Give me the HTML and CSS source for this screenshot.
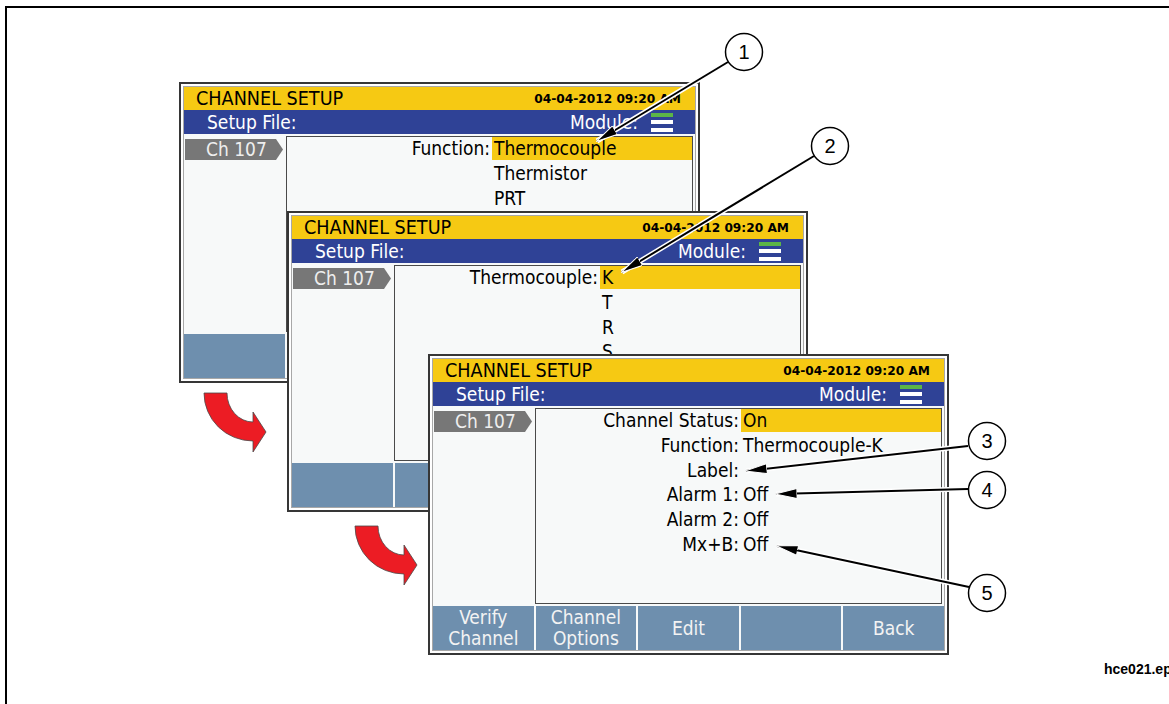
FILE: index.html
```html
<html>
  <head>
    <link rel="stylesheet" href="styles.css">
  </head>
  <body>
    <div class="frame">

      <div class="screen s1">
        <div class="lcd">
          <div class="title"><span class="name">CHANNEL SETUP</span><span class="clock">04-04-2012 09:20 AM</span></div>
          <div class="fileBar"><span>Setup File:</span><span class="module">Module: <i class="modIcon"><b></b><b></b><b></b></i></span></div>
          <div class="body">
            <div class="side"><div class="ch">Ch 107</div></div>
            <div class="list">
              <div class="k">Function:</div><div class="v sel">Thermocouple</div>
              <div class="k"></div><div class="v">Thermistor</div>
              <div class="k"></div><div class="v">PRT</div>
            </div>
          </div>
          <div class="keys">
            <div class="key"></div><div class="key"></div><div class="key"></div><div class="key"></div><div class="key"></div>
          </div>
        </div>
      </div>

      <div class="screen s2">
        <div class="lcd">
          <div class="title"><span class="name">CHANNEL SETUP</span><span class="clock">04-04-2012 09:20 AM</span></div>
          <div class="fileBar"><span>Setup File:</span><span class="module">Module: <i class="modIcon"><b></b><b></b><b></b></i></span></div>
          <div class="body">
            <div class="side"><div class="ch">Ch 107</div></div>
            <div class="list">
              <div class="k">Thermocouple:</div><div class="v sel">K</div>
              <div class="k"></div><div class="v">T</div>
              <div class="k"></div><div class="v">R</div>
              <div class="k"></div><div class="v">S</div>
            </div>
          </div>
          <div class="keys">
            <div class="key"></div><div class="key"></div><div class="key"></div><div class="key"></div><div class="key"></div>
          </div>
        </div>
      </div>

      <div class="screen s3">
        <div class="lcd">
          <div class="title"><span class="name">CHANNEL SETUP</span><span class="clock">04-04-2012 09:20 AM</span></div>
          <div class="fileBar"><span>Setup File:</span><span class="module">Module: <i class="modIcon"><b></b><b></b><b></b></i></span></div>
          <div class="body">
            <div class="side"><div class="ch">Ch 107</div></div>
            <div class="list">
              <div class="k">Channel Status:</div><div class="v sel">On</div>
              <div class="k">Function:</div><div class="v">Thermocouple-K</div>
              <div class="k">Label:</div><div class="v"></div>
              <div class="k">Alarm 1:</div><div class="v">Off</div>
              <div class="k">Alarm 2:</div><div class="v">Off</div>
              <div class="k">Mx+B:</div><div class="v">Off</div>
            </div>
          </div>
          <div class="keys">
            <div class="key">Verify<br>Channel</div>
            <div class="key">Channel<br>Options</div>
            <div class="key">Edit</div>
            <div class="key"></div>
            <div class="key">Back</div>
          </div>
        </div>
      </div>

      <!-- callouts and flow arrows, page coordinates -->
      <svg class="marks" viewBox="0 0 1169 704">
        <defs>
          <marker id="tip" viewBox="0 0 22 10" refX="21" refY="5" markerWidth="22" markerHeight="10" markerUnits="userSpaceOnUse" orient="auto">
            <path d="M0,0 L22,5 L0,10 Z" fill="#000" stroke="#fff" stroke-width="1"/>
          </marker>
        </defs>
        <g class="halo">
          <line x1="728" y1="62" x2="597" y2="141"/>
          <line x1="814" y1="156" x2="622" y2="272"/>
          <line x1="968" y1="446" x2="746" y2="471"/>
          <line x1="968" y1="489" x2="776" y2="494"/>
          <line x1="969" y1="587" x2="777" y2="546"/>
        </g>
        <g class="lead">
          <line x1="728" y1="62" x2="597" y2="141"/>
          <line x1="814" y1="156" x2="622" y2="272"/>
          <line x1="968" y1="446" x2="746" y2="471"/>
          <line x1="968" y1="489" x2="776" y2="494"/>
          <line x1="969" y1="587" x2="777" y2="546"/>
        </g>
        <g class="bubble">
          <circle cx="744" cy="52" r="18.5"/><text x="744" y="59">1</text>
          <circle cx="830" cy="146" r="18.5"/><text x="830" y="153">2</text>
          <circle cx="987" cy="441" r="18.5"/><text x="987" y="448">3</text>
          <circle cx="987" cy="490" r="18.5"/><text x="987" y="497">4</text>
          <circle cx="987" cy="593" r="18.5"/><text x="987" y="600">5</text>
        </g>
        <path class="flow" transform="translate(200,390)" d="M4,3 L27,3 A26,29 0 0 0 53,32 L53,22 L66,42 L53,62 L53,51 A49,48 0 0 1 4,3 Z"/>
        <path class="flow" transform="translate(351,523)" d="M4,3 L27,3 A26,29 0 0 0 53,32 L53,22 L66,42 L53,62 L53,51 A49,48 0 0 1 4,3 Z"/>
      </svg>

      <div class="eps">hce021.eps</div>
    </div>
  </body>
</html>
```

FILE: styles.css
```css
*{
  margin: 0;
  padding: 0;
  box-sizing: border-box;
}
body{
  background: #fff;
  overflow: hidden;
  width: 1169px;
  height: 704px;
}
.frame{
  position: relative;
  margin: 6px 0 0 5px;
  width: 1300px;
  height: 800px;
  border-top: 2px solid #000;
  border-left: 2px solid #000;
}

/* instrument screens */
.screen{
  position: absolute;
  width: 521px;
  height: 301px;
  border: 2px solid #363636;
  padding: 2px;
  background: #fff;
}
.s1{ left: 172px; top: 74px; }
.s2{ left: 280px; top: 203px; }
.s3{ left: 421px; top: 346px; }

.lcd{
  height: 100%;
  border: 1px solid #a8a8a8;
  background: #f7f9f9;
  display: flex;
  flex-direction: column;
  font-family: "DejaVu Sans Condensed", "DejaVu Sans", sans-serif;
  font-stretch: condensed;
  font-size: 19px;
  color: #000;
}
.title{
  height: 23px;
  background: #f6c913;
  display: flex;
  justify-content: space-between;
  align-items: center;
  padding: 0 14px 0 12px;
}
.name{
  font-size: 19.6px;
}
.clock{
  font-family: "DejaVu Sans", sans-serif;
  font-stretch: normal;
  font-weight: bold;
  font-size: 12.2px;
}
.fileBar{
  height: 24px;
  background: #2f4296;
  color: #fff;
  display: flex;
  justify-content: space-between;
  align-items: center;
  padding: 0 22px 0 23px;
}
.module{
  display: flex;
  align-items: center;
  gap: 13px;
}
.modIcon{
  display: flex;
  flex-direction: column;
  gap: 3.5px;
}
.modIcon b{
  display: block;
  width: 22px;
  height: 4px;
  background: #fff;
}
.modIcon b:first-child{
  background: #5cb547;
}

.body{
  height: 196px;
  margin: 2px 0;
  display: grid;
  grid-template-columns: 101px 1fr;
  column-gap: 1px;
}
.side{
  padding-top: 3px;
}
.ch{
  margin-left: 1px;
  width: 98px;
  height: 21px;
  line-height: 21px;
  padding-left: 21px;
  background: #777;
  color: #eee;
  clip-path: polygon(0 0, 91px 0, 98px 50%, 91px 100%, 0 100%);
}
.list{
  border: 1px solid #4a4a4a;
  margin-right: 2px;
  display: grid;
  grid-template-columns: 205px 1fr;
  grid-auto-rows: 23px;
  row-gap: 1.8px;
  align-content: start;
  line-height: 23px;
  overflow: hidden;
}
.k{
  text-align: right;
  padding-right: 2px;
  white-space: nowrap;
}
.v{
  padding-left: 2px;
  white-space: nowrap;
}
.sel{
  background: #f6c913;
}
.keys{
  height: 44px;
  display: grid;
  grid-template-columns: repeat(5, 1fr);
  gap: 2px;
}
.key{
  background: #6e8fae;
  color: #f3f3f3;
  display: flex;
  align-items: center;
  justify-content: center;
  text-align: center;
  line-height: 21px;
}

/* overlay */
.marks{
  position: absolute;
  left: -7px;
  top: -8px;
  width: 1169px;
  height: 704px;
}
.halo line{
  stroke: #fff;
  stroke-width: 5;
}
.lead line{
  stroke: #000;
  stroke-width: 2;
  marker-end: url(#tip);
}
.bubble circle{
  fill: #fff;
  stroke: #000;
  stroke-width: 1.5;
}
.bubble text{
  font-family: "Liberation Sans", sans-serif;
  font-size: 20px;
  text-anchor: middle;
  fill: #000;
}
.flow{
  fill: #ec1c24;
  stroke: #4a4a4a;
  stroke-width: 0.8;
}
.eps{
  position: absolute;
  left: 1097px;
  top: 653px;
  font-family: "Liberation Sans", sans-serif;
  font-weight: bold;
  font-size: 14px;
  line-height: 16px;
  white-space: nowrap;
}
```
